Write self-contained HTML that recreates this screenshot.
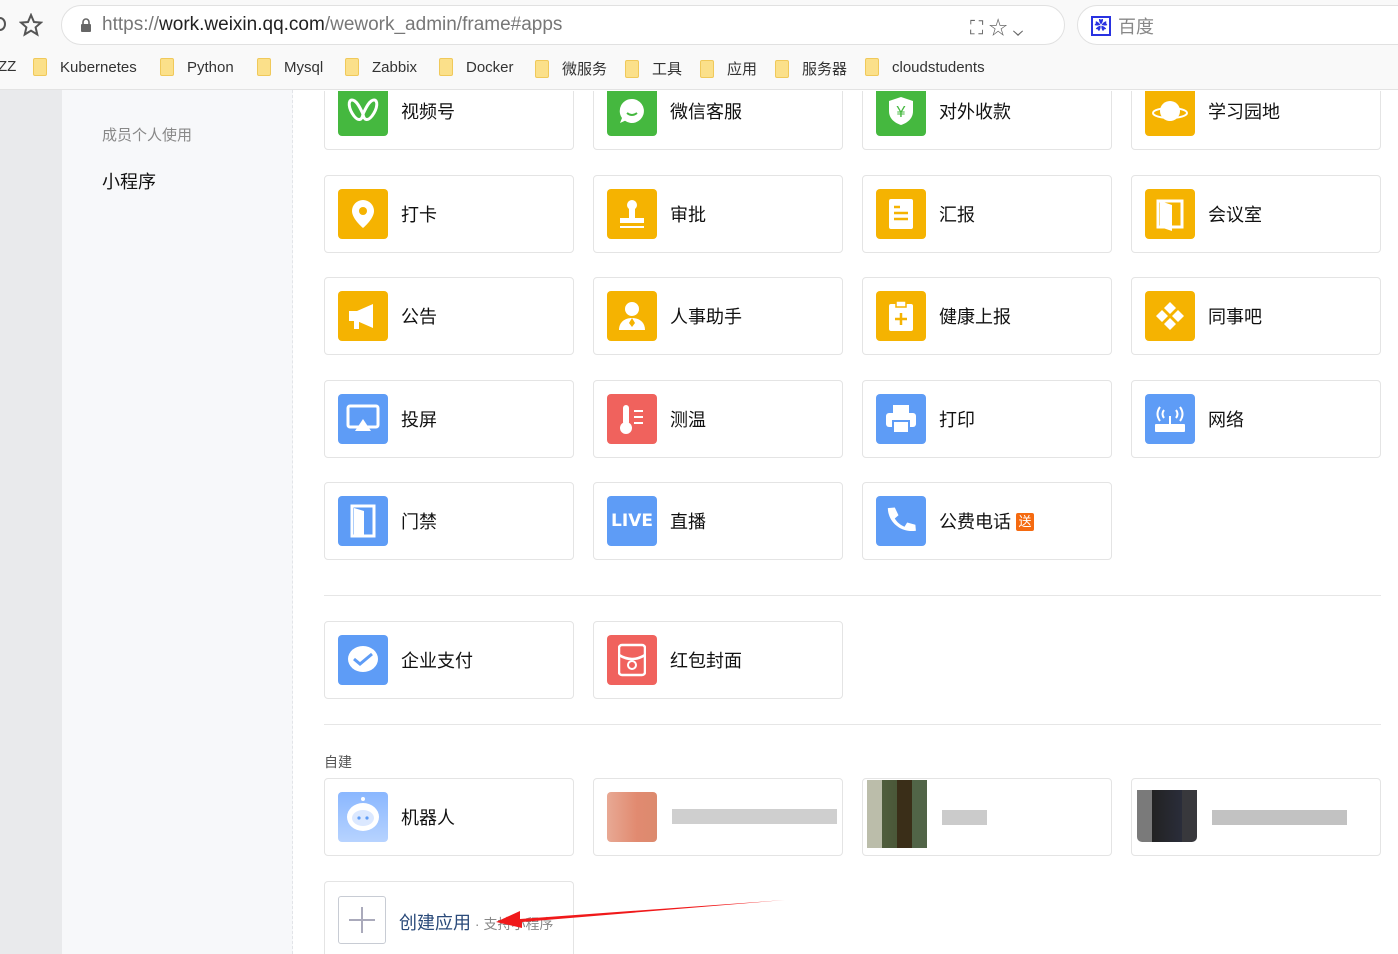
<!DOCTYPE html>
<html><head><meta charset="utf-8"><style>
*{margin:0;padding:0;box-sizing:border-box}
html,body{width:1398px;height:954px;overflow:hidden}
body{position:relative;background:#fff;font-family:"Liberation Sans","Noto Sans CJK SC",sans-serif;color:#222}
.chrome{position:absolute;left:0;top:0;width:1398px;height:90px;background:#f9f9f9;border-bottom:1px solid #e3e3e3}
.url{position:absolute;left:61px;top:5px;width:1004px;height:40px;border:1px solid #e1e1e1;border-radius:20px;background:#fff}
.url span{position:absolute;left:40px;top:8px;font-size:19px;color:#777}
.url b{font-weight:normal;color:#222}
.search{position:absolute;left:1077px;top:5px;width:340px;height:40px;border:1px solid #e1e1e1;border-radius:20px;background:#fff}
.bm{position:absolute;top:58px;font-size:15px;color:#333;display:flex;align-items:center}
.bm i{display:inline-block;width:14px;height:18px;background:#fbe08a;border:1px solid #f0c95a;border-radius:2px;margin-right:13px}
.lgray{position:absolute;left:0;top:90px;width:62px;height:864px;background:#e9eaec}
.side{position:absolute;left:62px;top:90px;width:231px;height:864px;background:#f7f8fa;border-right:1px dashed #e2e4e8}
.card{position:absolute;width:250px;height:78px;border:1px solid #e4e4e4;border-radius:4px;background:#fff}
.ic{position:absolute;left:13px;top:13px;width:50px;height:50px;border-radius:4px;display:flex;align-items:center;justify-content:center}
.t{position:absolute;left:76px;top:25px;font-size:18px;color:#111}
.g{background:#45b83f}.y{background:#f5b301}.b{background:#5e9cf6}.r{background:#f0625d}
.hr{position:absolute;left:324px;width:1057px;height:1px;background:#e6e6e6}
.px{position:absolute}
</style></head><body>
<div class="chrome">
 <div style="position:absolute;left:-6px;top:17px;width:12px;height:14px;border:2px solid #555;border-radius:50%"></div>
 <svg style="position:absolute;left:19px;top:13px" width="24" height="24" viewBox="0 0 24 24"><path d="M12 2l3 7 7 .6-5.4 4.7 1.7 7.2L12 17.7 5.7 21.5l1.7-7.2L2 9.6 9 9z" fill="none" stroke="#555" stroke-width="2"/></svg>
 <div class="url"><svg style="position:absolute;left:18px;top:12px" width="12" height="15" viewBox="0 0 12 15"><rect x="1" y="6" width="10" height="8" rx="1" fill="#666"/><path d="M3 6V4a3 3 0 016 0v2" fill="none" stroke="#666" stroke-width="1.6"/></svg><span>https://<b>work.weixin.qq.com</b>/wework_admin/frame#apps</span>
 <span style="left:908px;top:7px;color:#666">⛶ ☆ ⌄</span></div>
 <div class="search"><div style="position:absolute;left:13px;top:10px;width:20px;height:20px;border:2px solid #2932e1;background:#fff;color:#2932e1;font-size:13px;text-align:center;line-height:16px">✿</div><span style="position:absolute;left:40px;top:7px;font-size:18px;color:#888">百度</span></div>
 <div class="bm" style="left:-2px">ZZ</div>
 <div class="bm" style="left:33px"><i></i>Kubernetes</div>
 <div class="bm" style="left:160px"><i></i>Python</div>
 <div class="bm" style="left:257px"><i></i>Mysql</div>
 <div class="bm" style="left:345px"><i></i>Zabbix</div>
 <div class="bm" style="left:439px"><i></i>Docker</div>
 <div class="bm" style="left:535px"><i></i>微服务</div>
 <div class="bm" style="left:625px"><i></i>工具</div>
 <div class="bm" style="left:700px"><i></i>应用</div>
 <div class="bm" style="left:775px"><i></i>服务器</div>
 <div class="bm" style="left:865px"><i></i>cloudstudents</div>
</div>
<div class="lgray"></div>
<div class="side">
 <div style="position:absolute;left:40px;top:34px;font-size:15px;color:#888">成员个人使用</div>
 <div style="position:absolute;left:40px;top:78px;font-size:18px;color:#111">小程序</div>
</div>

<div style="position:absolute;left:293px;top:91px;width:1105px;height:863px;overflow:hidden">
<div style="position:absolute;left:-293px;top:-91px;width:1398px;height:954px">
<div class="card" style="left:324px;top:72px"><div class="ic g"><svg width="34" height="30" viewBox="0 0 34 30"><path d="M6 4c-4 0-4 8 2 16 4 5 8 5 9-2 1 7 5 7 9 2 6-8 6-16 2-16-5 0-9 10-11 14C15 14 11 4 6 4z" fill="none" stroke="#fff" stroke-width="3"/></svg></div><div class="t">视频号</div></div>
<div class="card" style="left:593px;top:72px"><div class="ic g"><svg width="30" height="30" viewBox="0 0 30 30"><path d="M15 3a12 12 0 11-7 21.8L3 27l2-5A12 12 0 0115 3z" fill="#fff"/><path d="M10 17q5 4 10 0" stroke="#45b83f" stroke-width="2" fill="none"/></svg></div><div class="t">微信客服</div></div>
<div class="card" style="left:862px;top:72px"><div class="ic g"><svg width="28" height="32" viewBox="0 0 28 32"><path d="M14 2l12 4v10c0 8-6 12-12 14C8 28 2 24 2 16V6z" fill="#fff"/><text x="14" y="22" font-size="16" fill="#45b83f" text-anchor="middle" font-family="Liberation Sans">¥</text></svg></div><div class="t">对外收款</div></div>
<div class="card" style="left:1131px;top:72px"><div class="ic y"><svg width="36" height="30" viewBox="0 0 36 30"><circle cx="18" cy="15" r="10" fill="#fff"/><ellipse cx="18" cy="17" rx="17" ry="5" fill="none" stroke="#fff" stroke-width="2"/></svg></div><div class="t">学习园地</div></div>
</div></div>

<div class="card" style="left:324px;top:175px"><div class="ic y"><svg width="26" height="32" viewBox="0 0 26 32"><path d="M13 2a11 11 0 0111 11c0 8-11 17-11 17S2 21 2 13A11 11 0 0113 2z" fill="#fff"/><circle cx="13" cy="13" r="4" fill="#f5b301"/></svg></div><div class="t">打卡</div></div>
<div class="card" style="left:593px;top:175px"><div class="ic y"><svg width="28" height="32" viewBox="0 0 28 32"><circle cx="14" cy="7" r="5" fill="#fff"/><rect x="11" y="10" width="6" height="10" fill="#fff"/><rect x="2" y="20" width="24" height="5" fill="#fff"/><rect x="2" y="28" width="24" height="2" fill="#fff"/></svg></div><div class="t">审批</div></div>
<div class="card" style="left:862px;top:175px"><div class="ic y"><svg width="26" height="32" viewBox="0 0 26 32"><rect x="1" y="1" width="24" height="30" rx="2" fill="#fff"/><path d="M6 9h6M6 15h14M6 21h14" stroke="#f5b301" stroke-width="2.5"/></svg></div><div class="t">汇报</div></div>
<div class="card" style="left:1131px;top:175px"><div class="ic y"><svg width="28" height="34" viewBox="0 0 28 34"><path d="M2 4h24v26H2z" fill="none" stroke="#fff" stroke-width="3"/><path d="M4 4l12 4v26L4 30z" fill="#fff"/></svg></div><div class="t">会议室</div></div>

<div class="card" style="left:324px;top:277px"><div class="ic y"><svg width="32" height="28" viewBox="0 0 32 28"><path d="M2 9h8l16-7v24L10 19H2z" fill="#fff"/><rect x="7" y="19" width="5" height="8" fill="#fff"/></svg></div><div class="t">公告</div></div>
<div class="card" style="left:593px;top:277px"><div class="ic y"><svg width="30" height="32" viewBox="0 0 30 32"><circle cx="15" cy="9" r="7" fill="#fff"/><path d="M2 30c0-8 6-12 13-12s13 4 13 12z" fill="#fff"/><path d="M15 18l-3 5 3 4 3-4z" fill="#f5b301"/></svg></div><div class="t">人事助手</div></div>
<div class="card" style="left:862px;top:277px"><div class="ic y"><svg width="26" height="32" viewBox="0 0 26 32"><rect x="1" y="4" width="24" height="27" rx="2" fill="#fff"/><rect x="8" y="1" width="10" height="6" fill="#fff" stroke="#f5b301" stroke-width="1.5"/><path d="M13 13v12M7 19h12" stroke="#f5b301" stroke-width="2.5"/></svg></div><div class="t">健康上报</div></div>
<div class="card" style="left:1131px;top:277px"><div class="ic y"><svg width="32" height="32" viewBox="0 0 32 32"><path d="M16 2l6 6-6 6-6-6zM2 16l6-6 6 6-6 6zM30 16l-6 6-6-6 6-6zM16 30l-6-6 6-6 6 6z" fill="#fff"/></svg></div><div class="t">同事吧</div></div>

<div class="card" style="left:324px;top:380px"><div class="ic b"><svg width="34" height="30" viewBox="0 0 34 30"><rect x="2" y="2" width="30" height="21" rx="2" fill="none" stroke="#fff" stroke-width="3"/><path d="M17 15l8 12H9z" fill="#fff"/></svg></div><div class="t">投屏</div></div>
<div class="card" style="left:593px;top:380px"><div class="ic r"><svg width="30" height="32" viewBox="0 0 30 32"><rect x="6" y="2" width="6" height="20" rx="3" fill="#fff"/><circle cx="9" cy="25" r="6" fill="#fff"/><path d="M17 8h9M17 14h9M17 20h9" stroke="#fff" stroke-width="2"/></svg></div><div class="t">测温</div></div>
<div class="card" style="left:862px;top:380px"><div class="ic b"><svg width="32" height="30" viewBox="0 0 32 30"><rect x="8" y="1" width="16" height="8" fill="#fff"/><rect x="1" y="9" width="30" height="14" rx="3" fill="#fff"/><rect x="8" y="17" width="16" height="12" fill="#fff" stroke="#5e9cf6" stroke-width="2"/></svg></div><div class="t">打印</div></div>
<div class="card" style="left:1131px;top:380px"><div class="ic b"><svg width="34" height="30" viewBox="0 0 34 30"><rect x="2" y="20" width="30" height="8" rx="1" fill="#fff"/><path d="M17 20v-8M11 6q-3 4 0 8M23 6q3 4 0 8M7 3q-5 7 0 14M27 3q5 7 0 14" stroke="#fff" stroke-width="2" fill="none"/></svg></div><div class="t">网络</div></div>

<div class="card" style="left:324px;top:482px"><div class="ic b"><svg width="26" height="34" viewBox="0 0 26 34"><rect x="2" y="2" width="22" height="30" fill="none" stroke="#fff" stroke-width="3"/><path d="M4 4l10 3v25H4z" fill="#fff"/></svg></div><div class="t">门禁</div></div>
<div class="card" style="left:593px;top:482px"><div class="ic b"><span style="color:#fff;font-weight:bold;font-size:17px;font-family:'DejaVu Sans'">LIVE</span></div><div class="t">直播</div></div>
<div class="card" style="left:862px;top:482px"><div class="ic b"><svg width="34" height="34" viewBox="0 0 34 34"><path d="M6 3l6 0 3 8-4 3c2 4 5 7 9 9l3-4 8 3v6c-15 1-27-11-26-25z" fill="#fff" transform="rotate(-5 17 17)"/></svg></div><div class="t">公费电话 <span style="display:inline-block;width:18px;height:18px;background:#f56a10;color:#fff;font-size:13px;line-height:18px;text-align:center;border-radius:2px;vertical-align:2px">送</span></div></div>

<div class="hr" style="top:595px"></div>
<div class="card" style="left:324px;top:621px"><div class="ic b"><svg width="34" height="32" viewBox="0 0 34 32"><ellipse cx="17" cy="15" rx="15" ry="13" fill="#fff"/><path d="M8 15l6 5 12-10" stroke="#5e9cf6" stroke-width="3" fill="none"/></svg></div><div class="t">企业支付</div></div>
<div class="card" style="left:593px;top:621px"><div class="ic r"><svg width="28" height="34" viewBox="0 0 28 34"><rect x="1" y="2" width="26" height="30" rx="3" fill="none" stroke="#fff" stroke-width="2.5"/><path d="M1 12q13 8 26 0" stroke="#fff" stroke-width="2.5" fill="none"/><circle cx="14" cy="22" r="4" fill="none" stroke="#fff" stroke-width="2"/></svg></div><div class="t">红包封面</div></div>

<div class="hr" style="top:724px"></div>
<div style="position:absolute;left:324px;top:752px;font-size:14px;color:#555">自建</div>
<div class="card" style="left:324px;top:778px"><div class="ic" style="background:linear-gradient(#8ab7ff,#b7d3ff)"><svg width="40" height="44" viewBox="0 0 40 44"><circle cx="20" cy="4" r="2" fill="#fff"/><ellipse cx="20" cy="22" rx="16" ry="14" fill="#fff"/><ellipse cx="20" cy="23" rx="11" ry="8" fill="#dbe8ff"/><circle cx="16" cy="23" r="1.6" fill="#5e9cf6"/><circle cx="24" cy="23" r="1.6" fill="#5e9cf6"/></svg></div><div class="t">机器人</div></div>
<div class="card" style="left:593px;top:778px"></div>
<div class="card" style="left:862px;top:778px"></div>
<div class="card" style="left:1131px;top:778px"></div>
<div class="px" style="left:607px;top:792px;width:50px;height:50px;border-radius:4px;background:linear-gradient(90deg,#e8a994,#e18a70 60%,#dc8a6e)"></div>
<div class="px" style="left:672px;top:809px;width:165px;height:15px;background:#cfcfcf"></div>
<div class="px" style="left:867px;top:780px;width:60px;height:68px;background:linear-gradient(90deg,#bbbdaa 25%,#4f5d3c 25%,#4a5738 50%,#3a2e18 50%,#3a2e18 75%,#516447 75%)"></div>
<div class="px" style="left:942px;top:810px;width:45px;height:15px;background:#cbcbcb"></div>
<div class="px" style="left:1137px;top:790px;width:60px;height:52px;border-radius:0 0 5px 5px;background:linear-gradient(90deg,#7a7a7a 25%,#222 25%,#2a2d3a 75%,#38383c 75%)"></div>
<div class="px" style="left:1212px;top:810px;width:135px;height:15px;background:#c2c2c2"></div>

<div class="card" style="left:324px;top:881px;height:73px;border-bottom:none;border-radius:4px 4px 0 0"><div style="position:absolute;left:13px;top:14px;width:48px;height:48px;border:1px solid #c8ccd4;border-radius:3px"><svg width="46" height="46" viewBox="0 0 46 46"><path d="M23 10v26M10 23h26" stroke="#aab" stroke-width="2"/></svg></div><div style="position:absolute;left:74px;top:27px;font-size:18px;color:#2a4a7a">创建应用<span style="font-size:14px;color:#888"> · 支持小程序</span></div></div>
<svg style="position:absolute;left:490px;top:895px" width="300" height="40" viewBox="0 0 300 40"><path d="M295 5L30 24l0-8-24 11 26 6 0-6z" fill="#f0191a"/></svg>
</body></html>
